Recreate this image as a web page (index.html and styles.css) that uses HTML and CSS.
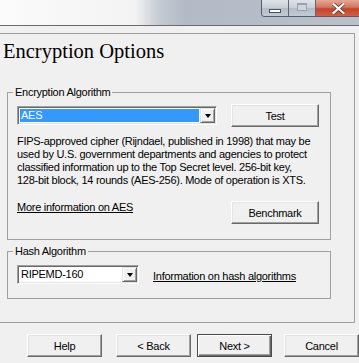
FILE: index.html
```html
<!DOCTYPE html>
<html lang="en">
<head>
    <meta charset="UTF-8">
    <title>Encryption Options</title>
    <link rel="stylesheet" href="styles.css">
</head>
<body>
    <div class="titlebar">
        <div class="caption-btns">
            <span class="cap min"><span class="min-icon"></span></span>
            <span class="cap max"><span class="max-icon"></span></span>
            <span class="cap close">
                <svg width="13" height="11" viewBox="0 0 13 11">
                    <path d="M1.5 1 L11.5 10 M11.5 1 L1.5 10" stroke="#5a2a20" stroke-width="3.6" stroke-linecap="square"/>
                    <path d="M1.5 1 L11.5 10 M11.5 1 L1.5 10" stroke="#fff" stroke-width="2.2" stroke-linecap="square"/>
                </svg>
            </span>
        </div>
    </div>

    <div class="frame">
        <h1>Encryption Options</h1>

        <fieldset class="group algo">
            <legend>Encryption Algorithm</legend>
            <div class="row">
                <div class="combo algo-combo">
                    <div class="combo-value"><span class="selected">AES</span></div>
                    <span class="arrow-btn"><span class="arrow"></span></span>
                </div>
                <button class="btn test-btn">Test</button>
            </div>
            <p class="desc">FIPS-approved cipher (Rijndael, published in 1998) that may be<br>used by U.S. government departments and agencies to protect<br>classified information up to the Top Secret level. 256-bit key,<br>128-bit block, 14 rounds (AES-256). Mode of operation is XTS.</p>
            <div class="row bottom-row">
                <a class="link" href="#">More information on AES</a>
                <button class="btn bench-btn">Benchmark</button>
            </div>
        </fieldset>

        <fieldset class="group hash">
            <legend>Hash Algorithm</legend>
            <div class="row">
                <div class="combo hash-combo">
                    <div class="combo-value">RIPEMD-160</div>
                    <span class="arrow-btn"><span class="arrow"></span></span>
                </div>
                <a class="link hash-link" href="#">Information on hash algorithms</a>
            </div>
        </fieldset>
    </div>

    <div class="footer">
        <button class="btn">Help</button>
        <button class="btn back-btn">&lt; Back</button>
        <button class="btn next-btn">Next &gt;</button>
        <button class="btn cancel-btn">Cancel</button>
    </div>
</body>
</html>
```

FILE: styles.css
```css
/* wizard page */
body {
    margin: 0;
    width: 359px;
    height: 363px;
    overflow: hidden;
    background: #f0f0f0;
    font-family: "Liberation Sans", Arial, sans-serif;
    font-size: 11px;
    letter-spacing: -0.27px;
    color: #000;
}

/* glass title bar */
.titlebar {
    height: 25px;
    border-bottom: 1px solid #6b6b6b;
    background: linear-gradient(to right, #fbfbfb 0, #f3f3f3 135px, #c4cad2 160px, #b3bac5 185px, #b9c0ca 100%);
    display: flex;
    justify-content: flex-end;
    align-items: flex-start;
}

.caption-btns {
    display: flex;
    height: 16px;
    margin-right: -2px;
    border: 1px solid #535c6a;
    border-top: none;
    border-radius: 0 0 4px 4px;
    overflow: hidden;
}

.cap {
    display: flex;
    align-items: center;
    justify-content: center;
    height: 16px;
}

.cap.min,
.cap.max {
    width: 26px;
    border-right: 1px solid #5d6776;
    background: linear-gradient(#dfe3e9, #c8ced7 50%, #b4bcc7 51%, #c3cad4);
}

.min-icon {
    width: 10px;
    height: 2px;
    margin-top: 5px;
    background: #fff;
    border: 1px solid #4a5260;
}

.max-icon {
    width: 8px;
    height: 5px;
    margin-top: -2px;
    border: 1px solid #9aa2ad;
    border-top-width: 2px;
    background: #cfd5dc;
}

.cap.close {
    width: 44px;
    background: linear-gradient(#e7a898, #d27560 45%, #c4442b 55%, #d35f43);
}

/* content frame */
.frame {
    margin-top: 7px;
    width: 355px;
    height: 290px;
    box-sizing: border-box;
    border-top: 1px solid #a0a0a0;
    border-right: 1px solid #a0a0a0;
    border-bottom: 1px solid #a0a0a0;
}

h1 {
    margin: 6px 0 0 3px;
    font-family: "Liberation Serif", "Times New Roman", serif;
    font-size: 20.5px;
    line-height: 23px;
    font-weight: normal;
    letter-spacing: 0;
}

.group {
    width: 324px;
    box-sizing: border-box;
    margin: 0 0 0 7px;
    padding: 5px 11px 15px 9px;
    border: 1px solid #a0a0a0;
}

.group legend {
    padding: 0 2px;
    margin-left: -4px;
    line-height: 13px;
}

.algo {
    margin-top: 23px;
}

.hash {
    margin-top: 5px;
    padding-bottom: 12px;
}

.row {
    display: flex;
    align-items: center;
    height: 23px;
}

/* combo boxes */
.combo {
    display: flex;
    height: 19px;
    box-sizing: border-box;
    border: 1px solid;
    border-color: #a0a0a0 #fff #fff #a0a0a0;
    box-shadow: inset 1px 1px #696969, inset -1px -1px #e3e3e3;
    background: #fff;
    padding: 2px;
}

.algo-combo {
    width: 200px;
}

.hash-combo {
    width: 122px;
}

.combo-value {
    flex: 1;
    display: flex;
    align-items: center;
    line-height: 13px;
    padding-left: 1px;
}

.selected {
    flex: 1;
    height: 13px;
    margin-left: -1px;
    margin-right: 1px;
    padding-left: 1px;
    background: #3399ff;
    color: #fff;
}

.arrow-btn {
    width: 15px;
    margin: -1px -1px -1px 0;
    box-sizing: border-box;
    display: flex;
    align-items: center;
    justify-content: center;
    background: #f0f0f0;
    border: 1px solid;
    border-color: #e3e3e3 #696969 #696969 #e3e3e3;
    box-shadow: inset 1px 1px #fff, inset -1px -1px #a0a0a0;
}

.arrow {
    width: 0;
    height: 0;
    border-left: 3.5px solid transparent;
    border-right: 3.5px solid transparent;
    border-top: 4px solid #000;
    margin-top: 1px;
}

/* buttons */
.btn {
    width: 75px;
    height: 23px;
    box-sizing: border-box;
    padding: 0;
    font: inherit;
    letter-spacing: inherit;
    color: #000;
    background: #f0f0f0;
    border: 1px solid;
    border-color: #fff #696969 #696969 #fff;
    box-shadow: inset -1px -1px #a0a0a0, inset 1px 1px #e3e3e3;
}

.test-btn,
.bench-btn {
    width: 88px;
}

.test-btn {
    margin-left: 14px;
}

.desc {
    margin: 8px 0 0;
    line-height: 13px;
}

.bottom-row {
    margin-top: 14px;
    justify-content: space-between;
    align-items: flex-start;
}

.link {
    color: #000;
    text-decoration: underline;
    line-height: 13px;
}

.hash-link {
    margin-left: 14px;
    margin-top: 3px;
}

/* wizard buttons */
.footer {
    display: flex;
    padding: 11px 0 0 27px;
}

.back-btn {
    margin-left: 14px;
}

.next-btn {
    margin-left: 6px;
    border: 1px solid #4a4a4a;
    box-shadow: inset 1px 1px #fff, inset -1px -1px #696969, inset -2px -2px #a0a0a0;
}

.cancel-btn {
    margin-left: 12px;
}
```
